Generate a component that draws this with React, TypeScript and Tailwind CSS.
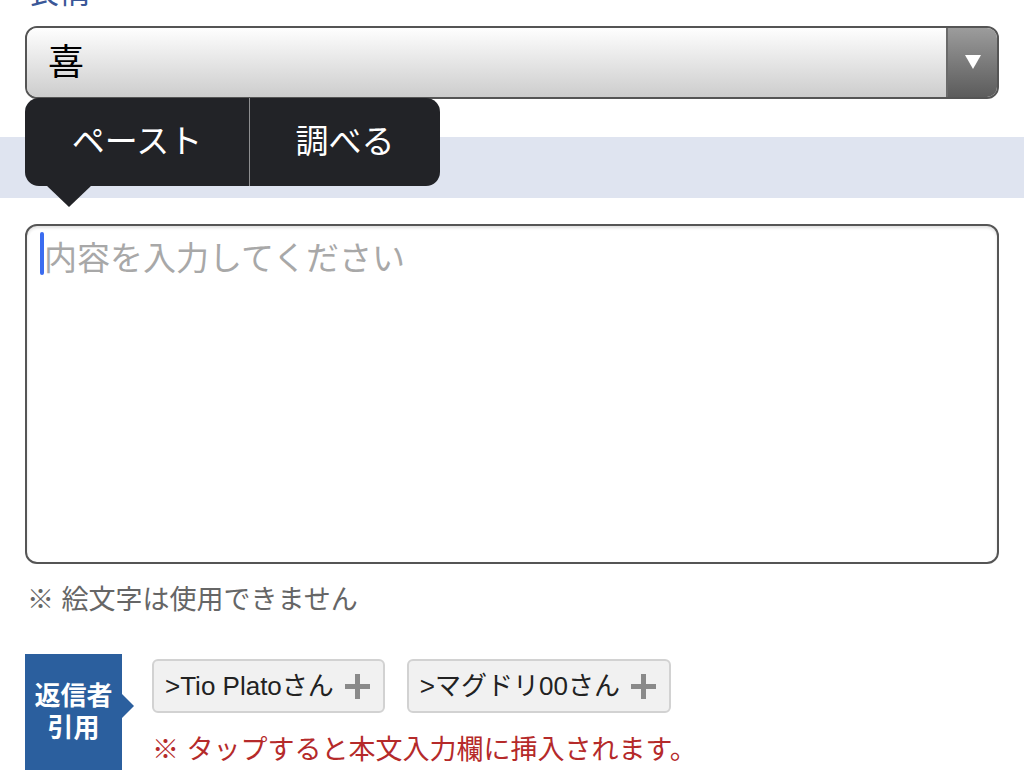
import React from 'react';

const quotes = ['>Tio Platoさん', '>マグドリ00さん'];

const PlusIcon = () => (
  <svg width="25" height="25" viewBox="0 0 25 25" className="shrink-0">
    <rect x="10" y="0" width="5" height="25" fill="#8a8a8a" />
    <rect x="0" y="10" width="25" height="5" fill="#8a8a8a" />
  </svg>
);

const App = () => {
  return (
    <div className="min-h-screen w-[1024px] overflow-hidden bg-white font-['Liberation_Sans','Noto_Sans_CJK_JP',sans-serif]">
      <div className="px-[25px]">
        {/* section label, scrolled partly off screen */}
        <div className="-mt-[24px] h-[32px] pl-[2px] text-[32px] leading-[32px] text-[#3a5797]">
          表情
        </div>

        {/* select + edit menu */}
        <div className="relative mt-[18px]">
          <div className="flex h-[73px] overflow-hidden rounded-[12px] border-2 border-[#555]">
            <div className="flex flex-1 items-center bg-gradient-to-b from-[#fefefe] to-[#cdcdcd] pl-[21px] text-[36px] text-black">
              喜
            </div>
            <div className="flex w-[51px] items-center justify-center border-l-2 border-[#6a6a6a] bg-gradient-to-b from-[#9c9c9c] to-[#5c5c5c]">
              <svg width="16" height="14" viewBox="0 0 16 14" className="-mt-[2px]">
                <polygon points="0,0 16,0 8,14" fill="#fff" />
              </svg>
            </div>
          </div>

          <div className="absolute left-0 top-[72px] z-10 w-[415px]">
            <div className="flex h-[88px] overflow-hidden rounded-[14px] bg-[#222327] text-[33px] text-white">
              <div className="flex w-[224px] items-center justify-center">ペースト</div>
              <div className="w-px bg-[#8e8e90]" />
              <div className="flex flex-1 items-center justify-center">調べる</div>
            </div>
            <svg width="46" height="22" viewBox="0 0 46 22" className="ml-[21px] -mt-px block">
              <polygon points="0,0 46,0 23,22" fill="#222327" />
            </svg>
          </div>
        </div>

        {/* band */}
        <div className="-mx-[25px] mt-[38px] flex h-[61px] items-center bg-[#dfe4f0] pl-[27px] text-[30px] text-[#3a5797]">
          本文
        </div>

        {/* textarea */}
        <div className="mt-[26px] h-[340px] rounded-[12px] border-2 border-[#555] shadow-[inset_0_2px_3px_rgba(0,0,0,0.12)]">
          <div className="flex items-start pl-[13px] pt-[5px]">
            <div className="mt-[1px] h-[43px] w-[4px] rounded-full bg-[#3b6cf0]" />
            <div className="mt-[6px] text-[33px] leading-[44px] text-[#a8a8a8]">内容を入力してください</div>
          </div>
        </div>

        <div className="mt-[18px] pl-[2px] text-[27px] leading-[36px] text-[#666]">※ 絵文字は使用できません</div>

        {/* reply quote */}
        <div className="mt-[36px] flex gap-[30px]">
          <div className="relative flex h-[116px] w-[97px] shrink-0 flex-col items-center justify-center bg-[#2b5f9e] text-[26px] font-bold leading-[32px] text-white">
            <div>返信者</div>
            <div>引用</div>
            <div className="absolute left-full top-[40px] h-0 w-0 border-y-[12px] border-l-[12px] border-y-transparent border-l-[#2b5f9e]" />
          </div>
          <div className="pt-[5px]">
            <div className="flex gap-[22px]">
              {quotes.map((q) => (
                <div
                  key={q}
                  className="flex h-[54px] items-center gap-[11px] rounded-[6px] border-2 border-[#d2d2d2] bg-[#f1f1f1] pl-[11px] pr-[13px] text-[26px] text-[#222]"
                >
                  <span>{q}</span>
                  <PlusIcon />
                </div>
              ))}
            </div>
            <div className="mt-[22px] text-[27px] leading-[30px] text-[#b52a2a]">※ タップすると本文入力欄に挿入されます。</div>
          </div>
        </div>
      </div>
    </div>
  );
};

export default App;
